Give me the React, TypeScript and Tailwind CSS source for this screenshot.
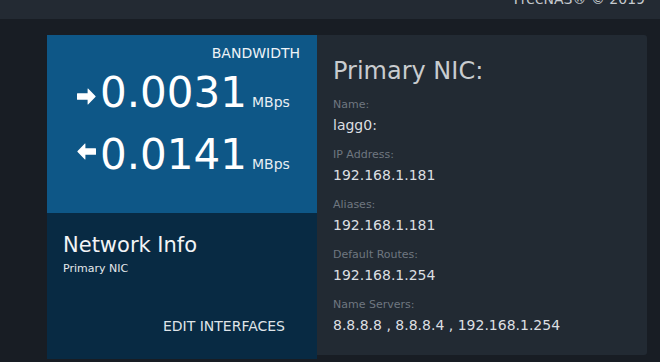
const FONT = { fontFamily: '"DejaVu Sans", "Liberation Sans", sans-serif' };

const NIC_FIELDS = [
  { label: "Name:", value: "lagg0:" },
  { label: "IP Address:", value: "192.168.1.181" },
  { label: "Aliases:", value: "192.168.1.181" },
  { label: "Default Routes:", value: "192.168.1.254" },
  { label: "Name Servers:", value: "8.8.8.8 , 8.8.8.4 , 192.168.1.254" },
];

function ArrowRight({ className }: { className?: string }) {
  return (
    <svg viewBox="0 0 19 17" className={className} fill="currentColor">
      <path d="M0.5 5.2 H10.6 V0.8 Q10.6 0.2 11.1 0.6 L18.4 7.9 Q19 8.5 18.4 9.1 L11.1 16.4 Q10.6 16.8 10.6 16.2 V11.8 H0.5 Q0 11.8 0 11.3 V5.7 Q0 5.2 0.5 5.2 Z" />
    </svg>
  );
}

function ArrowLeft({ className }: { className?: string }) {
  return (
    <svg viewBox="0 0 19 17" className={className} fill="currentColor">
      <path d="M18.5 5.2 H8.4 V0.8 Q8.4 0.2 7.9 0.6 L0.6 7.9 Q0 8.5 0.6 9.1 L7.9 16.4 Q8.4 16.8 8.4 16.2 V11.8 H18.5 Q19 11.8 19 11.3 V5.7 Q19 5.2 18.5 5.2 Z" />
    </svg>
  );
}

export default function App() {
  return (
    <div
      className="w-[660px] h-[362px] overflow-hidden bg-[#181d24] flex flex-col"
      style={FONT}
    >
      {/* Top bar, mostly scrolled out of view */}
      <div className="h-[19px] shrink-0 bg-[#232a33] flex justify-end pr-[15px] overflow-hidden">
        <span className="text-[14px] leading-[16px] -mt-[9px] text-[#c6cacf]">
          FreeNAS® © 2019
        </span>
      </div>

      <div className="pl-[47px] pt-[16px] flex items-start">
        {/* Left: bandwidth + network info */}
        <div className="w-[270px] flex flex-col">
          <div className="h-[178px] bg-[#0e5787] flex flex-col text-white">
            <div className="pt-[10px] pr-[17px] text-right text-[14px] leading-[16px] text-[#eef3f7]">
              BANDWIDTH
            </div>
            <div className="mt-[11px] pl-[30px] flex items-baseline">
              <ArrowRight className="w-[19px] h-[17px] self-end mb-[9px] mr-[4px]" />
              <span className="text-[42px] leading-[42px]">0.0031</span>
              <span className="ml-[5px] text-[14px] text-[#e8eef3]">MBps</span>
            </div>
            <div className="mt-[20px] pl-[30px] flex items-baseline">
              <ArrowLeft className="w-[19px] h-[17px] self-end mb-[16px] mr-[4px]" />
              <span className="text-[42px] leading-[42px]">0.0141</span>
              <span className="ml-[5px] text-[14px] text-[#e8eef3]">MBps</span>
            </div>
          </div>
          <div className="h-[146px] bg-[#082a43] flex flex-col pl-[16px] text-white">
            <div className="pt-[20px] text-[21px] leading-[24px] text-[#f2f4f6]">
              Network Info
            </div>
            <div className="mt-[4px] text-[11px] leading-[16px] text-[#e4e8eb]">
              Primary NIC
            </div>
            <div className="mt-auto pb-[25px] pr-[32px] text-right text-[14px] leading-[16px] text-[#dfe4e8]">
              EDIT INTERFACES
            </div>
          </div>
        </div>

        {/* Right: primary NIC details */}
        <div className="w-[330px] h-[320px] bg-[#222a33] rounded-r-[3px] pl-[16px] pt-[22px] flex flex-col">
          <div className="text-[24px] leading-[28px] text-[#c9cccf]">Primary NIC:</div>
          <div className="mt-[12px] flex flex-col gap-[12px]">
            {NIC_FIELDS.map(({ label, value }) => (
              <div key={label} className="flex flex-col gap-[2px]">
                <div className="text-[11px] leading-[16px] text-[#6f7780]">{label}</div>
                <div className="text-[14px] leading-[20px] text-[#dcdfe2]">{value}</div>
              </div>
            ))}
          </div>
        </div>
      </div>
    </div>
  );
}
